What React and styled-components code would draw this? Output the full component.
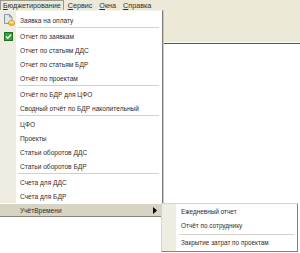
import React from "react";
import styled, { createGlobalStyle } from "styled-components";

const GlobalStyle = createGlobalStyle`
  html, body {
    margin: 0;
    padding: 0;
    background: #ffffff;
  }
  body {
    font-family: "Liberation Sans", Arial, sans-serif;
  }
`;

const mainItems = [
  { label: "Заявка на оплату", icon: "doc" },
  { sep: true },
  { label: "Отчет по заявкам", icon: "check" },
  { label: "Отчет по статьям ДДС" },
  { label: "Отчет по статьям БДР" },
  { label: "Отчёт по проектам" },
  { sep: true },
  { label: "Отчёт по БДР для ЦФО" },
  { label: "Сводный отчёт по БДР накопительный" },
  { sep: true },
  { label: "ЦФО" },
  { label: "Проекты" },
  { label: "Статьи оборотов ДДС" },
  { label: "Статьи оборотов БДР" },
  { sep: true },
  { label: "Счета для ДДС" },
  { label: "Счета для БДР" },
];

const subItems = [
  { label: "Ежедневный отчет" },
  { label: "Отчёт по сотруднику" },
  { sep: true },
  { label: "Закрытие затрат по проектам" },
];

function DocIcon() {
  return (
    <svg width="12" height="12" viewBox="0 0 12 12">
      <path d="M1.5 0.5h5l2.5 2.5v6.5h-7.5z" fill="#dfe6f0" stroke="#8796ab" strokeWidth="1" />
      <path d="M6.5 0.5v2.5h2.5" fill="none" stroke="#8796ab" strokeWidth="1" />
      <ellipse cx="8.5" cy="9" rx="3" ry="2.5" fill="#f2c230" stroke="#c88a10" strokeWidth="0.8" />
      <ellipse cx="8.5" cy="8.3" rx="2" ry="1.2" fill="#fde27a" />
    </svg>
  );
}

function CheckIcon() {
  return (
    <svg width="9" height="9" viewBox="0 0 9 9">
      <rect x="0.5" y="0.5" width="8" height="8" fill="#2fa83a" stroke="#1d6f24" />
      <path d="M2 4.5l1.8 1.8L7 2.8" fill="none" stroke="#ffffff" strokeWidth="1.3" />
    </svg>
  );
}

function Arrow() {
  return (
    <svg width="4" height="7" viewBox="0 0 4 7">
      <path d="M0 0l4 3.5L0 7z" fill="#000000" />
    </svg>
  );
}

export default function App() {
  return (
    <>
      <GlobalStyle />
      <Window>
        <MenuBar>
          <BarItem $open>
            <u>Б</u>юджетирование
          </BarItem>
          <BarItem>
            <u>С</u>ервис
          </BarItem>
          <BarItem>
            <u>О</u>кна
          </BarItem>
          <BarItem>
            <u>С</u>правка
          </BarItem>
        </MenuBar>
        <Toolbar />

        <Dropdown>
          {mainItems.map((it, i) =>
            it.sep ? (
              <Separator key={i} />
            ) : (
              <Item key={i}>
                <IconSlot>
                  {it.icon === "doc" && <DocIcon />}
                  {it.icon === "check" && <CheckIcon />}
                </IconSlot>
                {it.label}
              </Item>
            )
          )}
          <ActiveItem>
            <span>УчётВремени</span>
            <Arrow />
          </ActiveItem>
        </Dropdown>

        <SubMenu>
          {subItems.map((it, i) =>
            it.sep ? (
              <SubSeparator key={i} />
            ) : (
              <SubItem key={i}>{it.label}</SubItem>
            )
          )}
        </SubMenu>
      </Window>
    </>
  );
}

const Window = styled.div`
  position: relative;
  width: 300px;
  height: 253px;
  overflow: hidden;
  background: #ffffff;
  color: #2e2e2e;
`;

const MenuBar = styled.div`
  display: flex;
  height: 10px;
  background: #ece9d8;
  font-size: 7.2px;
  line-height: 10px;
`;

const BarItem = styled.div`
  padding: 0 2px;
  margin-right: 1px;
  box-sizing: border-box;
  border: 1px solid ${(p) => (p.$open ? "#9d9a8c" : "transparent")};
  border-bottom: none;
  line-height: 9px;
  white-space: nowrap;

  u {
    text-decoration-thickness: 1px;
  }
`;

const Toolbar = styled.div`
  height: 33px;
  background: #ece9d8;
  border-bottom: 1px solid #57564e;
  box-shadow: inset 0 -1px 0 #fbfaf5;
`;

const Dropdown = styled.div`
  position: absolute;
  top: 10px;
  left: 0;
  width: 163px;
  box-sizing: border-box;
  padding-top: 2px;
  background: linear-gradient(to right, #efede2 16px, #ffffff 16px);
  border-top: 1px solid #f4f3ec;
  border-right: 1px solid #7d7d78;
  box-shadow: 1px 0 0 #c9c7bd;
  font-size: 6.6px;
`;

const Item = styled.div`
  display: flex;
  align-items: center;
  height: 14px;
  white-space: nowrap;
`;

const IconSlot = styled.div`
  width: 20px;
  height: 14px;
  display: flex;
  align-items: center;
  justify-content: center;
  padding-right: 3px;
  box-sizing: border-box;
`;

const Separator = styled.div`
  height: 2px;
  margin: 0 3px 0 18px;
  border-top: 1px solid #d4d2c8;
  box-sizing: border-box;
`;

const ActiveItem = styled.div`
  display: flex;
  align-items: center;
  justify-content: space-between;
  height: 14px;
  box-sizing: border-box;
  padding: 0 5px 0 20px;
  margin-right: -1px;
  background: #d8d4c4;
  border-top: 1px solid #ffffff;
  border-bottom: 1px solid #86847a;
  border-right: 1px solid #86847a;
`;

const SubMenu = styled.div`
  position: absolute;
  top: 203px;
  left: 161px;
  width: 137px;
  box-sizing: border-box;
  padding: 1px 0 1px;
  background: linear-gradient(to right, #efede2 14px, #ffffff 14px);
  border: 1px solid #86847a;
  border-top-color: #d8d6cc;
  border-left-color: #d8d6cc;
  font-size: 6.4px;
`;

const SubItem = styled.div`
  height: 14px;
  line-height: 14px;
  padding-left: 19px;
  white-space: nowrap;
`;

const SubSeparator = styled.div`
  height: 3px;
  margin: 0 3px 0 17px;
  border-top: 1px solid #d4d2c8;
  box-sizing: border-box;
  transform: translateY(1px);
`;
